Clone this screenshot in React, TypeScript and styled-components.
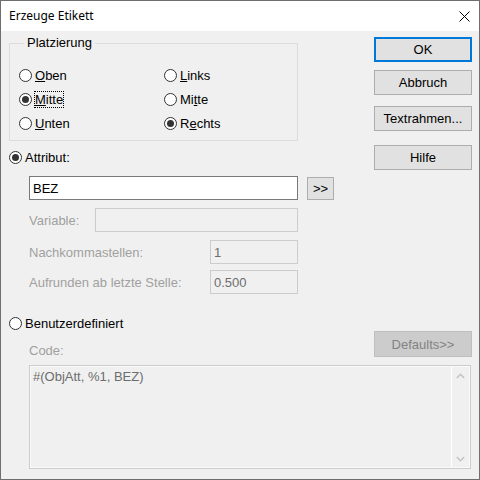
import React from "react";
import styled, { createGlobalStyle } from "styled-components";

const GlobalStyle = createGlobalStyle`
  html, body { margin: 0; padding: 0; background: #f0f0f0; }
  body { width: 480px; height: 480px; overflow: hidden; }
  *, *::before, *::after { box-sizing: border-box; }
`;

const UI_FONT = `"Liberation Sans", Arial, sans-serif`;

const Window = styled.div`
  width: 480px;
  height: 480px;
  border: 1px solid #6e6e6e;
  background: #f0f0f0;
  display: flex;
  flex-direction: column;
  font-family: ${UI_FONT};
  font-size: 13px;
  line-height: 15px;
  color: #000;
`;

const TitleBar = styled.div`
  height: 30px;
  flex-shrink: 0;
  background: #fff;
  display: flex;
  align-items: center;
  justify-content: space-between;
  padding: 0 9px 0 8px;
`;

const Title = styled.span`
  font-family: "Noto Sans", "Liberation Sans", sans-serif;
  font-size: 12px;
  line-height: 16px;
  color: #000;
`;

const CloseIcon = styled.svg`
  width: 11px;
  height: 11px;
  display: block;
`;

const Body = styled.div`
  flex: 1;
  display: flex;
  flex-direction: column;
  padding: 0 7px 0 8px;
`;

const TopSection = styled.div`
  display: flex;
  justify-content: space-between;
  align-items: flex-start;
`;

const LeftColumn = styled.div`
  width: 325px;
  margin-top: 4px;
  display: flex;
  flex-direction: column;
`;

const GroupBox = styled.fieldset`
  width: 289px;
  min-width: 0;
  margin: 0;
  padding: 12px 0 5px 9px;
  border: 1px solid #dcdcdc;
`;

const GroupLegend = styled.legend`
  margin-left: 5px;
  padding: 0 3px;
  line-height: 16px;
`;

const RadioGrid = styled.div`
  display: grid;
  grid-template-columns: 145px 1fr;
  grid-auto-rows: 24px;
`;

const Radio = styled.label<{ $h?: number; $top?: number }>`
  display: flex;
  align-items: center;
  gap: 3px;
  height: ${(p) => p.$h ?? 24}px;
  margin-top: ${(p) => p.$top ?? 0}px;
  cursor: default;
  white-space: nowrap;
`;

const RadioCircle = styled.span<{ $on?: boolean }>`
  width: 13px;
  height: 13px;
  flex-shrink: 0;
  border-radius: 50%;
  border: 1px solid #333;
  background: #fff;
  display: grid;
  place-items: center;
  &::after {
    content: "";
    width: 7px;
    height: 7px;
    border-radius: 50%;
    background: #333;
    display: ${(p) => (p.$on ? "block" : "none")};
  }
`;

const Caption = styled.span<{ $focus?: boolean }>`
  outline: ${(p) => (p.$focus ? "1px dotted #000" : "none")};
  u {
    text-decoration: underline;
    text-underline-offset: 1px;
  }
`;

const FieldRow = styled.div<{ $top: number }>`
  width: 269px;
  margin: ${(p) => p.$top}px 0 0 20px;
  display: flex;
  align-items: center;
`;

const EntryRow = styled.div<{ $top: number }>`
  margin: ${(p) => p.$top}px 0 0 20px;
  display: flex;
  align-items: center;
  gap: 9px;
`;

const FieldLabel = styled.span`
  flex: 1;
  color: #a0a0a0;
  white-space: nowrap;
`;

const TextField = styled.input<{ $w: number }>`
  width: ${(p) => p.$w}px;
  height: 24px;
  margin: 0;
  padding: 0 3px;
  font: inherit;
  color: #000;
  background: #fff;
  border: 1px solid #7a7a7a;
  border-radius: 0;
  outline: none;
  &:disabled {
    background: #f0f0f0;
    border-color: #cccccc;
    color: #6d6d6d;
    -webkit-text-fill-color: #6d6d6d;
    opacity: 1;
  }
`;

const SmallButton = styled.button`
  width: 27px;
  height: 23px;
  margin: 0;
  padding: 0;
  font: inherit;
  color: #000;
  background: #e1e1e1;
  border: 1px solid #adadad;
  border-radius: 0;
`;

const ButtonColumn = styled.div`
  width: 98px;
  margin-top: 6px;
  display: flex;
  flex-direction: column;
`;

const DialogButton = styled.button<{ $top?: number; $default?: boolean }>`
  width: 98px;
  height: 25px;
  margin: ${(p) => p.$top ?? 0}px 0 0 0;
  padding: 0;
  font: inherit;
  color: #000;
  background: #e1e1e1;
  border: ${(p) => (p.$default ? "2px solid #0078d7" : "1px solid #adadad")};
  border-radius: 0;
  &:disabled {
    height: 26px;
    background: #cccccc;
    border-color: #bfbfbf;
    color: #838383;
  }
`;

const CodeRow = styled.div`
  margin-left: 20px;
  display: flex;
  justify-content: space-between;
  align-items: flex-start;
`;

const CodeLabel = styled.span`
  margin-top: 12px;
  color: #a0a0a0;
`;

const CodeBox = styled.div`
  height: 104px;
  margin: 7px 1px 0 20px;
  border: 1px solid #cccccc;
  background: #f0f0f0;
  box-shadow: inset 0 0 0 1px #fafafa;
  display: flex;
`;

const CodeText = styled.div`
  flex: 1;
  padding: 3px 0 0 3px;
  color: #6d6d6d;
`;

const ScrollTrack = styled.div`
  width: 18px;
  border-left: 1px solid #fff;
  display: flex;
  flex-direction: column;
  justify-content: space-between;
  margin: 1px 1px 1px 0;
`;

const ScrollArrow = styled.div`
  height: 17px;
  display: grid;
  place-items: center;
`;

const Chevron = ({ down }: { down?: boolean }) => (
  <svg width="9" height="6" viewBox="0 0 9 6">
    <path
      d={down ? "M0.8 1 L4.5 4.7 L8.2 1" : "M0.8 5 L4.5 1.3 L8.2 5"}
      fill="none"
      stroke="#c2c2c2"
      strokeWidth="1.4"
    />
  </svg>
);

export default function App() {
  return (
    <>
      <GlobalStyle />
      <Window>
        <TitleBar>
          <Title>Erzeuge Etikett</Title>
          <CloseIcon viewBox="0 0 11 11">
            <path d="M0.5 0.5 L10.5 10.5 M10.5 0.5 L0.5 10.5" stroke="#000" strokeWidth="1" fill="none" />
          </CloseIcon>
        </TitleBar>
        <Body>
          <TopSection>
            <LeftColumn>
              <GroupBox>
                <GroupLegend>Platzierung</GroupLegend>
                <RadioGrid>
                  <Radio>
                    <RadioCircle />
                    <Caption><u>O</u>ben</Caption>
                  </Radio>
                  <Radio>
                    <RadioCircle />
                    <Caption><u>L</u>inks</Caption>
                  </Radio>
                  <Radio>
                    <RadioCircle $on />
                    <Caption $focus><u>M</u>itte</Caption>
                  </Radio>
                  <Radio>
                    <RadioCircle />
                    <Caption>Mi<u>t</u>te</Caption>
                  </Radio>
                  <Radio>
                    <RadioCircle />
                    <Caption><u>U</u>nten</Caption>
                  </Radio>
                  <Radio>
                    <RadioCircle $on />
                    <Caption>R<u>e</u>chts</Caption>
                  </Radio>
                </RadioGrid>
              </GroupBox>

              <Radio $h={15} $top={9}>
                <RadioCircle $on />
                <Caption>Attribut:</Caption>
              </Radio>

              <EntryRow $top={11}>
                <TextField $w={269} readOnly value="BEZ" />
                <SmallButton>&gt;&gt;</SmallButton>
              </EntryRow>

              <FieldRow $top={8}>
                <FieldLabel>Variable:</FieldLabel>
                <TextField $w={203} disabled value="" />
              </FieldRow>
              <FieldRow $top={8}>
                <FieldLabel>Nachkommastellen:</FieldLabel>
                <TextField $w={88} disabled value="1" />
              </FieldRow>
              <FieldRow $top={6}>
                <FieldLabel>Aufrunden ab letzte Stelle:</FieldLabel>
                <TextField $w={88} disabled value="0.500" />
              </FieldRow>
            </LeftColumn>

            <ButtonColumn>
              <DialogButton $default>OK</DialogButton>
              <DialogButton $top={8}>Abbruch</DialogButton>
              <DialogButton $top={11}>Textrahmen...</DialogButton>
              <DialogButton $top={14}>Hilfe</DialogButton>
            </ButtonColumn>
          </TopSection>

          <Radio $h={15} $top={22}>
            <RadioCircle />
            <Caption>Benutzerdefiniert</Caption>
          </Radio>

          <CodeRow>
            <CodeLabel>Code:</CodeLabel>
            <DialogButton disabled>Defaults&gt;&gt;</DialogButton>
          </CodeRow>

          <CodeBox>
            <CodeText>#(ObjAtt, %1, BEZ)</CodeText>
            <ScrollTrack>
              <ScrollArrow><Chevron /></ScrollArrow>
              <ScrollArrow><Chevron down /></ScrollArrow>
            </ScrollTrack>
          </CodeBox>
        </Body>
      </Window>
    </>
  );
}
